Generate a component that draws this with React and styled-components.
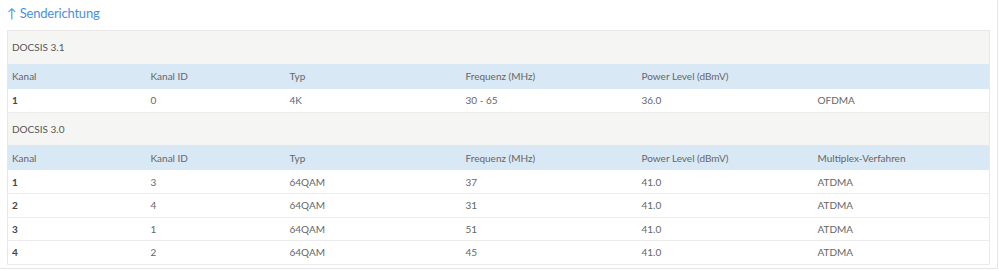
import React from 'react'
import styled, { createGlobalStyle } from 'styled-components'

const GlobalStyle = createGlobalStyle`
  body {
    margin: 0;
    background: #fff;
    font-family: Lato, "Open Sans", sans-serif;
  }
`

const sections = [
  {
    title: 'DOCSIS 3.1',
    last: '',
    rows: [['1', '0', '4K', '30 - 65', '36.0', 'OFDMA']],
  },
  {
    title: 'DOCSIS 3.0',
    last: 'Multiplex-Verfahren',
    rows: [
      ['1', '3', '64QAM', '37', '41.0', 'ATDMA'],
      ['2', '4', '64QAM', '31', '41.0', 'ATDMA'],
      ['3', '1', '64QAM', '51', '41.0', 'ATDMA'],
      ['4', '2', '64QAM', '45', '41.0', 'ATDMA'],
    ],
  },
]

const widths = [139, 139, 176, 176, 176, 176]

export default function App() {
  return (
    <React.Fragment>
      <GlobalStyle />
      <Card>
        <Title>↑ Senderichtung</Title>
        <Table>
          <colgroup>
            {widths.map((w, i) => (
              <col key={i} style={{ width: w }} />
            ))}
          </colgroup>
          <tbody>
            {sections.map((s) => (
              <React.Fragment key={s.title}>
                <GroupRow>
                  <td colSpan={6}>{s.title}</td>
                </GroupRow>
                <HeadRow>
                  <th>Kanal</th>
                  <th>Kanal ID</th>
                  <th>Typ</th>
                  <th>Frequenz (MHz)</th>
                  <th>Power Level (dBmV)</th>
                  <th>{s.last}</th>
                </HeadRow>
                {s.rows.map((r, i) => (
                  <DataRow key={i}>
                    {r.map((c, j) => (
                      <Cell key={j} $first={j === 0}>
                        {c}
                      </Cell>
                    ))}
                  </DataRow>
                ))}
              </React.Fragment>
            ))}
          </tbody>
        </Table>
      </Card>
    </React.Fragment>
  )
}

const Card = styled.div`
  width: 998px;
  height: 269px;
  border-right: 1px solid #e6e6e6;
  border-bottom: 1px solid #e6e6e6;
  padding: 4px 9px 0 7px;
  box-sizing: border-box;
`

const Title = styled.div`
  font-size: 13px;
  letter-spacing: -0.2px;
  color: #4a90e2;
  height: 26px;
  line-height: 19px;
`

const Table = styled.table`
  width: 982px;
  border-collapse: collapse;
  table-layout: fixed;
  border: 1px solid #e8e8e8;
  font-size: 10px;
  color: #666;
`

const GroupRow = styled.tr`
  background: #f5f5f3;
  height: 33px;
  td {
    padding: 0 0 0 4px;
    color: #555;
  }
`

const HeadRow = styled.tr`
  background: #d9e8f5;
  height: 25px;
  th {
    text-align: left;
    font-weight: 400;
    padding: 0 0 0 4px;
    color: #666;
  }
`

const DataRow = styled.tr`
  height: 23.5px;
  border-bottom: 1px solid #ececec;
  background: #fff;
`

const Cell = styled.td`
  padding: 0 0 0 4px;
  font-weight: ${(p) => (p.$first ? 700 : 400)};
  color: ${(p) => (p.$first ? '#444' : '#666')};
`
